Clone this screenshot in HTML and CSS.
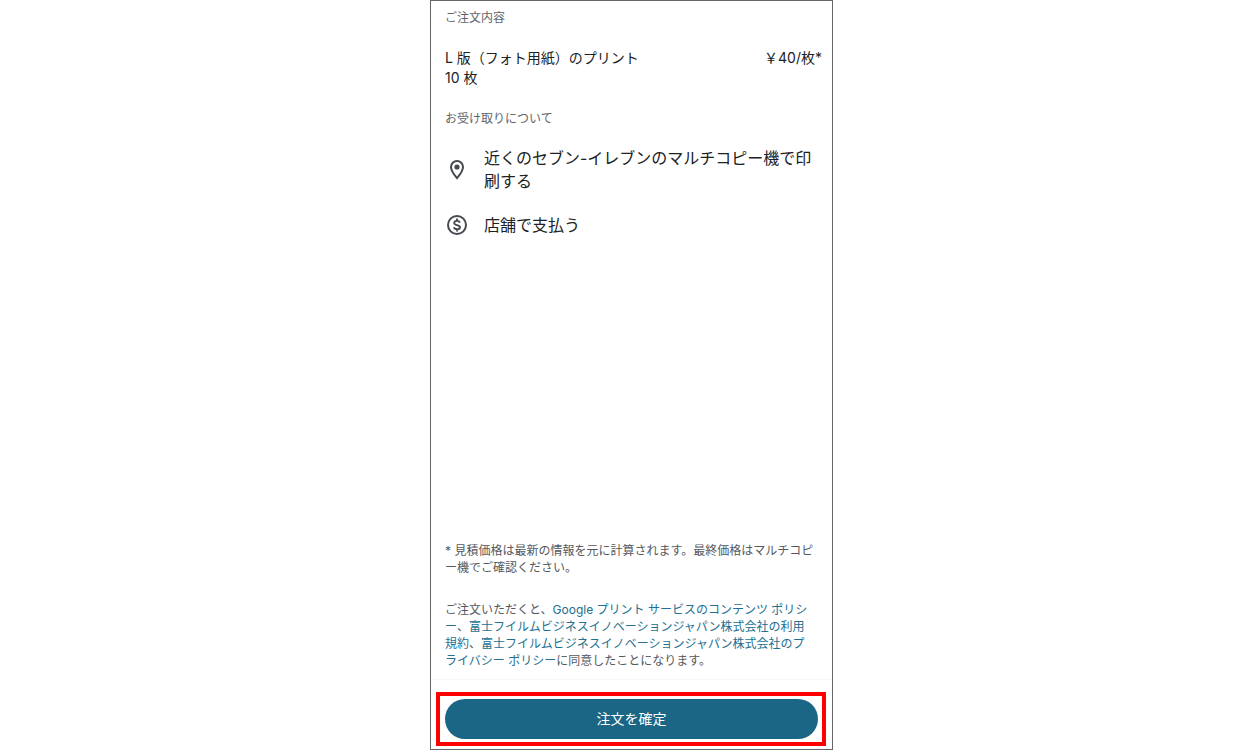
FILE: index.html
```html
<!DOCTYPE html>
<html lang="ja">
<head>
    <meta charset="UTF-8">
    <meta name="viewport" content="width=device-width, initial-scale=1.0">
    <title>ご注文内容</title>
    <link rel="stylesheet" href="styles.css">
</head>
<body>
    <div class="screen">
        <main class="content">
            <h2 class="heading">ご注文内容</h2>
            <div class="order">
                <div>L 版（フォト用紙）のプリント<br>10 枚</div>
                <div class="price">￥40/枚*</div>
            </div>
            <h2 class="heading">お受け取りについて</h2>
            <ul class="pickup">
                <li>
                    <svg class="icon" viewBox="0 0 24 24" aria-hidden="true">
                        <path d="M12 3a6 6 0 0 0-6 6c0 4.200 6 11.200 6 11.200s6-7 6-11.200a6 6 0 0 0-6-6z" fill="none" stroke="currentColor" stroke-width="2"/>
                        <circle cx="12" cy="9" r="2.600" fill="currentColor"/>
                    </svg>
                    <span>近くのセブン-イレブンのマルチコピー機で印刷する</span>
                </li>
                <li>
                    <svg class="icon" viewBox="0 0 24 24" aria-hidden="true">
                        <circle cx="12" cy="12" r="9" fill="none" stroke="currentColor" stroke-width="2"/>
                        <path d="M12 5.500v2.300M12 16.200v2.300M14.900 9.700c-.4-1.200-1.500-1.800-2.900-1.800-1.700 0-2.800.8-2.800 2 0 1.400 1.300 1.800 2.800 2.200s3 .8 3 2.200c0 1.200-1.200 2-2.900 2-1.500 0-2.800-.8-3.200-2.100" fill="none" stroke="currentColor" stroke-width="1.900"/>
                    </svg>
                    <span>店舗で支払う</span>
                </li>
            </ul>
            <div class="notes">
                <p>* 見積価格は最新の情報を元に計算されます。最終価格はマルチコピー機でご確認ください。</p>
                <p>ご注文いただくと、<a href="#">Google プリント サービスのコンテンツ ポリシー</a>、<a href="#">富士フイルムビジネスイノベーションジャパン株式会社の利用規約</a>、<a href="#">富士フイルムビジネスイノベーションジャパン株式会社のプライバシー ポリシー</a>に同意したことになります。</p>
            </div>
        </main>
        <footer class="footer">
            <div class="highlight">
                <button class="confirm" type="button">注文を確定</button>
            </div>
        </footer>
    </div>
</body>
</html>
```

FILE: styles.css
```css
*{
    box-sizing: border-box;
}
body{
    margin: 0;
    padding-left: 13px;
    background-color: white;
    font-family: Inter, "Noto Sans CJK JP", sans-serif;
    color: #202124;
}
.screen{
    display: flex;
    flex-direction: column;
    max-width: 403px;
    min-height: 100vh;
    margin: 0 auto;
    border: 1px solid #666668;
}
.content{
    display: flex;
    flex-direction: column;
    flex: 1;
    padding: 8px 10px 10px 14px;
}
.heading{
    margin: 0;
    font-size: 12px;
    font-weight: 400;
    line-height: 17px;
    color: #5f6368;
}
.order{
    display: flex;
    justify-content: space-between;
    margin: 22px 0;
    font-size: 14px;
    line-height: 20px;
}
.pickup{
    display: flex;
    flex-direction: column;
    gap: 20px;
    margin: 20px 0;
    padding: 0;
    list-style: none;
    font-size: 16px;
    line-height: 23px;
}
.pickup li{
    display: flex;
    align-items: center;
    gap: 15px;
}
.icon{
    flex: none;
    width: 24px;
    height: 24px;
    color: #444a50;
}
.notes{
    display: flex;
    flex-direction: column;
    gap: 25px;
    margin-top: auto;
    padding-right: 6px;
    font-size: 12px;
    line-height: 17px;
    line-break: loose;
    color: #55595e;
}
.notes p{
    margin: 0;
}
.notes a{
    color: #226f90;
    text-decoration: none;
}
.footer{
    padding: 12px 6px 3px 5px;
    border-top: 1px solid #f7f7f7;
}
.highlight{
    padding: 3px 4px 3px 5px;
    border: 4px solid #ff0000;
}
.confirm{
    display: block;
    width: 100%;
    height: 40px;
    padding: 0 0 2px;
    border: none;
    border-radius: 20px;
    background-color: #1b6685;
    color: white;
    font-family: inherit;
    font-size: 14px;
}
```
